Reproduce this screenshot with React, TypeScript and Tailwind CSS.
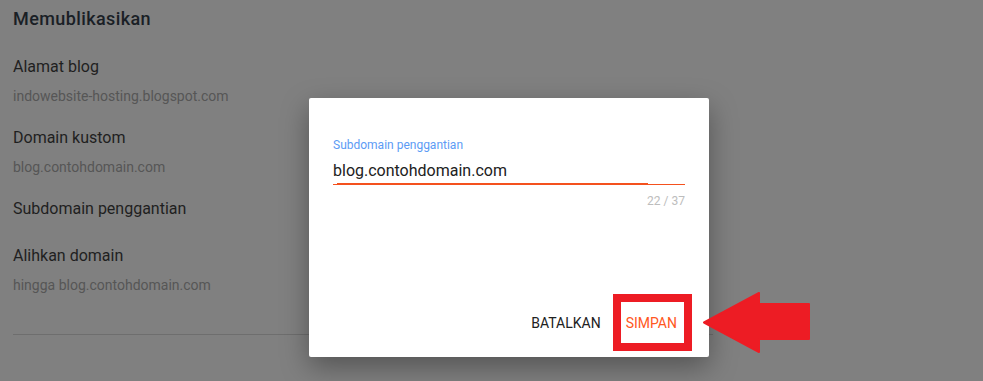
export default function App() {
  const rows = [
    { title: 'Alamat blog', sub: 'indowebsite-hosting.blogspot.com', mt: 'mt-[26px]' },
    { title: 'Domain kustom', sub: 'blog.contohdomain.com', mt: 'mt-[21px]' },
    { title: 'Subdomain penggantian', sub: '', mt: 'mt-[21px]' },
    { title: 'Alihkan domain', sub: 'hingga blog.contohdomain.com', mt: 'mt-[25px]' },
  ];

  return (
    <div
      className="relative h-[381px] w-[983px] overflow-hidden bg-[#808080]"
      style={{ fontFamily: 'Roboto, "Liberation Sans", sans-serif' }}
    >
      {/* settings page behind the scrim */}
      <div className="pl-[13px] pt-2">
        <h2 className="text-[18px] font-medium leading-[22px] tracking-[0.4px] text-[#1a1f26]">Memublikasikan</h2>
        {rows.map((r) => (
          <div key={r.title} className={r.mt}>
            <p className="text-[16px] leading-[22px] text-[#1f1f1f]">{r.title}</p>
            {r.sub && <p className="mt-[8px] text-[14px] leading-[20px] text-[#565656]">{r.sub}</p>}
          </div>
        ))}
        <div className="mt-[39px] h-px w-[700px] bg-[#6e6e6e]" />
      </div>

      {/* dialog */}
      <div className="absolute left-[309px] top-[98px] flex h-[259px] w-[400px] flex-col rounded-[2px] bg-white px-6 pb-4 pt-[39px] shadow-[0_10px_28px_rgba(0,0,0,0.35)]">
        <label className="text-[12px] leading-[16px] text-[#5c9bf5]">Subdomain penggantian</label>
        <div className="mt-[6px] text-[16px] leading-[24px] text-[#212121]">blog.contohdomain.com</div>
        <div className="relative h-[2px]">
          <div className="absolute inset-x-0 top-[1px] h-px bg-[#f4511e]" />
          <div className="absolute left-[4px] top-0 h-[2px] w-[311px] bg-[#f4511e]" />
        </div>
        <div className="mt-2 text-right text-[12px] leading-[16px] text-[#bdbdbd]">22 / 37</div>
        <div className="mt-auto flex justify-end gap-[9px]">
          <button className="h-9 px-2 text-[14px] font-normal uppercase text-[#212121]">Batalkan</button>
          <button className="h-9 px-2 text-[14px] font-normal uppercase text-[#ff5722]">Simpan</button>
        </div>
      </div>

      {/* annotation: highlight box + arrow */}
      <div className="absolute left-[613px] top-[294px] h-[57px] w-[79px] border-[8px] border-[#ed1c24]" />
      <svg className="absolute left-[703px] top-[292px]" width="107" height="61" viewBox="0 0 107 61">
        <polygon
          points="1,30.5 56,1 56,12 106,12 106,47 56,47 56,60"
          fill="#ed1c24"
          stroke="#ed1c24"
          strokeWidth="2"
          strokeLinejoin="round"
        />
      </svg>
    </div>
  );
}
